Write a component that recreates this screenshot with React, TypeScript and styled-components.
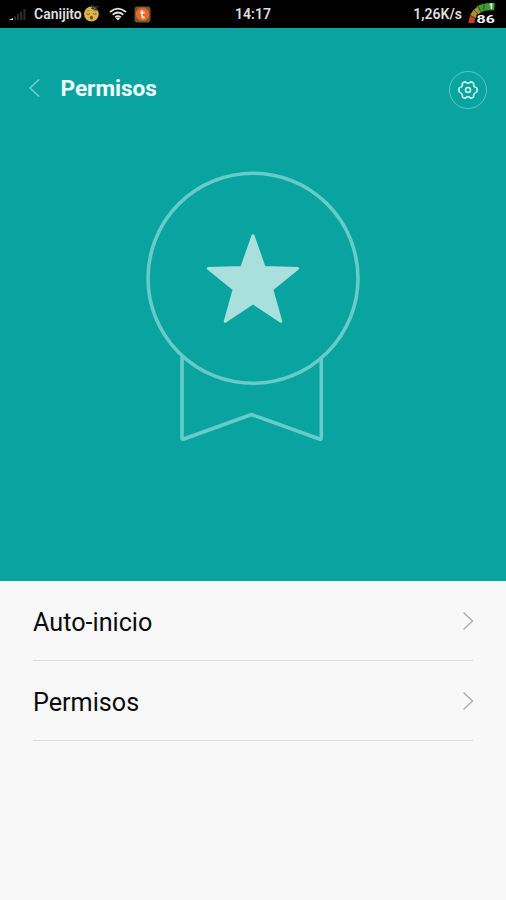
import React from 'react';
import styled, { createGlobalStyle } from 'styled-components';

const GlobalStyle = createGlobalStyle`
  * { box-sizing: border-box; }
  body { margin: 0; background: #f8f8f8; font-family: Roboto, sans-serif; }
`;

const Screen = styled.div`
  display: flex;
  flex-direction: column;
  width: 100%;
  height: 900px;
  overflow: hidden;
  background: #f8f8f8;
`;

const StatusBar = styled.header`
  display: grid;
  grid-template-columns: 1fr auto 1fr;
  align-items: center;
  height: 28px;
  flex: none;
  padding: 0 9px;
  background: #000;
  color: #dedede;
  font-size: 14px;
  line-height: 28px;
  font-weight: 600;
`;

const StatusGroup = styled.div<{ $end?: boolean }>`
  display: flex;
  align-items: center;
  height: 28px;
  justify-content: ${({ $end }) => ($end ? 'flex-end' : 'flex-start')};
`;

const Carrier = styled.span`
  width: 49px;
  margin-left: 8px;
`;

const Clock = styled.span``;

const Speed = styled.span`
  margin-right: 6px;
`;

const StatusIcon = styled.svg<{ $gap?: number }>`
  display: block;
  flex: none;
  margin-left: ${({ $gap = 0 }) => $gap}px;
`;

const Hero = styled.section`
  display: flex;
  flex-direction: column;
  height: 553px;
  flex: none;
  background: #0aa4a0;
`;

const TitleBar = styled.div`
  display: flex;
  align-items: center;
  height: 124px;
  padding: 0 19px 0 28px;
`;

const BackButton = styled.button`
  display: flex;
  margin-bottom: 4px;
  padding: 0;
  border: 0;
  background: none;
`;

const Title = styled.h1`
  flex: 1;
  margin: 0 0 2px 18.5px;
  color: #f2ffff;
  font-size: 22.6px;
  line-height: 30px;
  font-weight: 700;
`;

const SettingsButton = styled.button`
  display: flex;
  align-items: center;
  justify-content: center;
  width: 38px;
  height: 38px;
  padding: 0;
  border: 1px solid #5cc5c1;
  border-radius: 50%;
  background: none;
`;

const Badge = styled.svg`
  display: block;
  align-self: center;
  margin-top: 13px;
`;

const List = styled.ul`
  margin: 0;
  padding: 0 33px;
  list-style: none;
`;

const Row = styled.li`
  display: flex;
  align-items: center;
  justify-content: space-between;
  height: 80px;
  padding-top: 3px;
  border-bottom: 1px solid #dcdcdc;
  color: #0b0b0b;
  font-size: 25.2px;
`;

const RowArrow = styled.svg`
  display: block;
  margin: -2px -1px 0 0;
`;

const SignalIcon = () => (
  <StatusIcon width="17" height="14" viewBox="0 0 17 14">
    <path d="M0 13L4 11V13Z" fill="#eee" />
    <path d="M5 9.5H7V13H5ZM8 7H10V13H8ZM11 4.5H13V13H11ZM14.4 2H16.4V13H14.4Z" fill="#2c2c2c" />
  </StatusIcon>
);

const SleepyFace = () => (
  <StatusIcon width="17" height="18" viewBox="0 0 17 18">
    <circle cx="8.4" cy="9" r="7.4" fill="#d8b550" />
    <path d="M8.4 1.6A7.4 7.4 0 0 1 15.3 6.5L9.4 4.5Z" fill="#74612a" />
    <path d="M8 .8H11L8.5 3.5H11M12 1.6H15L12.5 4.5H15" stroke="#3b3728" fill="none" />
    <path d="M3.6 8.8Q5.3 10.2 7 8.6M10 8.6Q11.5 10.2 13.4 8.4" stroke="#795a20" strokeWidth="1" fill="none" />
    <path d="M4 6.2L6.6 5.2M10.4 5.2L13 6.2" stroke="#967430" strokeWidth=".8" />
    <ellipse cx="8.4" cy="12.7" rx="1.6" ry="1.9" fill="#7b5224" />
  </StatusIcon>
);

const WifiIcon = () => (
  <StatusIcon $gap={9} width="18" height="14" viewBox="0 0 18 14">
    <path d="M1 5Q9 -1.7 17 5M3.7 7.7Q9 3.4 14.3 7.7M6.2 10.2Q9 8 11.8 10.2" stroke="#e4e4e4" strokeWidth="1.8" fill="none" />
    <path d="M6.8 11.2Q9 9.6 11.2 11.2L9 13.5Z" fill="#e4e4e4" />
  </StatusIcon>
);

const AppIcon = () => (
  <StatusIcon $gap={7} width="17" height="17" viewBox="0 0 17 17">
    <rect x=".5" y=".5" width="16" height="16" rx="3" fill="#6d5a36" />
    <circle cx="8.5" cy="8.3" r="6.7" fill="#f06428" />
    <path d="M8 4V10.2Q8 12 10.7 11.3M6 6.7H10.7" stroke="#ffe6d8" strokeWidth="1.8" fill="none" />
  </StatusIcon>
);

const BatteryGauge = () => (
  <StatusIcon width="29" height="24" viewBox="0 0 29 24">
    <path d="M3.5 21Q3.4 17.5 5.2 14" stroke="#c83f28" strokeWidth="6" fill="none" />
    <path d="M5 14.3Q7.2 10 11.4 7.2" stroke="#a8902d" strokeWidth="6.5" fill="none" />
    <path d="M10.8 7.6Q16 3.8 26.5 4.8" stroke="#3c9c31" strokeWidth="7.4" fill="none" />
    <path d="M6 8L10 12M10 3.5L12.5 10M16 1V8M2 13L8 17" stroke="#20371a" strokeWidth=".7" />
    <path d="M21.6 2L24.2 1V7H22.7V3.2H21.6Z" fill="#f5f5f5" />
    <path d="M8.5 12.4H27V22H8.5Z" fill="#000" />
    <text x="8.6" y="21.2" fill="#f4f4f4" fontFamily="Roboto" fontWeight="700" fontSize="11.3" textLength="18.2" lengthAdjust="spacingAndGlyphs">86</text>
  </StatusIcon>
);

const rows = ['Auto-inicio', 'Permisos'];

export default function App() {
  return (
    <>
      <GlobalStyle />
      <Screen>
        <StatusBar>
          <StatusGroup>
            <SignalIcon />
            <Carrier>Canijito</Carrier>
            <SleepyFace />
            <WifiIcon />
            <AppIcon />
          </StatusGroup>
          <Clock>14:17</Clock>
          <StatusGroup $end>
            <Speed>1,26K/s</Speed>
            <BatteryGauge />
          </StatusGroup>
        </StatusBar>
        <Hero>
          <TitleBar>
            <BackButton aria-label="Atrás">
              <svg width="14" height="20" viewBox="0 0 14 20">
                <path d="M11 1.5L2 10L11 18.5" stroke="#7bd2ce" strokeWidth="1.4" fill="none" />
              </svg>
            </BackButton>
            <Title>Permisos</Title>
            <SettingsButton aria-label="Ajustes">
              <svg width="20" height="20" viewBox="0 0 20 20" fill="none" stroke="#d9fffb" strokeWidth="1.5" strokeLinejoin="round">
                <path d="M6.4 1.8Q7.5 1.5 8.2 2.6Q10 3.8 11.8 2.6Q12.5 1.5 13.6 1.8L15.2 2.8Q16 3.4 15.6 4.8Q15.7 6.8 17.6 7.4Q19 7.8 19 8.8V11.2Q19 12.2 17.6 12.6Q15.7 13.2 15.6 15.2Q16 16.6 15.2 17.2L13.6 18.2Q12.5 18.5 11.8 17.4Q10 16.2 8.2 17.4Q7.5 18.5 6.4 18.2L4.8 17.2Q4 16.6 4.4 15.2Q4.3 13.2 2.4 12.6Q1 12.2 1 11.2V8.8Q1 7.8 2.4 7.4Q4.3 6.8 4.4 4.8Q4 3.4 4.8 2.8Z" />
                <circle cx="10" cy="10" r="2.5" />
              </svg>
            </SettingsButton>
          </TitleBar>
          <Badge width="230" height="285" viewBox="138 165 230 285">
            <g fill="none" stroke="#67cbc7" strokeWidth="3.6" strokeLinejoin="round">
              <circle cx="253" cy="278.3" r="105" />
              <path d="M182 356.5V438Q182 439.8 183.8 439L251.5 414.5L319.5 439Q321.3 439.8 321.3 438V356.5" />
            </g>
            <path d="M253 235.8L264.2 267.5L297.7 268.4L271.8 289.3L280.8 321.3L253 302.8L225.2 321.3L234.2 289.3L208.3 268.4L241.8 267.5Z" fill="#a9dfdd" stroke="#a9dfdd" strokeWidth="3" strokeLinejoin="round" />
          </Badge>
        </Hero>
        <List>
          {rows.map((label) => (
            <Row key={label}>
              <span>{label}</span>
              <RowArrow width="12" height="20" viewBox="0 0 12 20">
                <path d="M1.5 1.5L10.5 10L1.5 18.5" stroke="#adadad" strokeWidth="1.4" fill="none" />
              </RowArrow>
            </Row>
          ))}
        </List>
      </Screen>
    </>
  );
}
